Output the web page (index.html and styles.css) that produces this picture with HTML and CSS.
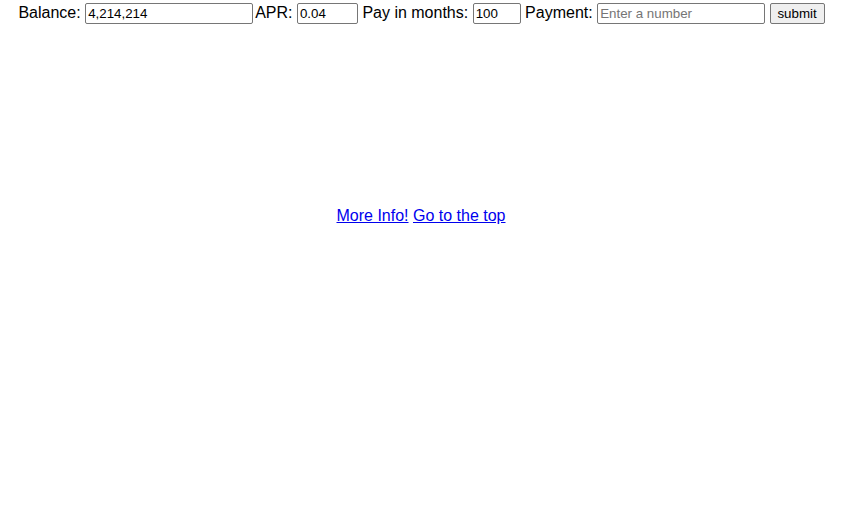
FILE: index.html
```html
<!DOCTYPE html>
<html>
<head>
<meta charset="utf-8">
<link rel="stylesheet" href="styles.css">
</head>
<body>
<form class="calc">
  <label>Balance: <input class="field field-wide" type="text" value="4,214,214"></label><label class="apr">APR: <input class="field field-apr" type="text" value="0.04"></label>
  <label>Pay in months: <input class="field field-months" type="text" value="100"></label>
  <label>Payment: <input class="field field-wide" type="text" placeholder="Enter a number"></label>
  <button class="submit" type="button">submit</button>
</form>
<div class="links">
  <a href="#">More Info!</a> <a href="#">Go to the top</a>
</div>
</body>
</html>
```
FILE: styles.css
```css
html, body {
  margin: 0;
  padding: 0;
  background: #fff;
}
body {
  font-family: "Liberation Sans", Arial, sans-serif;
  font-size: 16px;
  color: #000;
}
.calc {
  text-align: center;
  padding: 2px 8px 0 0;
  line-height: 21px;
  margin: 0;
}
.apr {
  margin-left: 2px;
}
.field {
  box-sizing: border-box;
  height: 21px;
  font-family: "Liberation Sans", Arial, sans-serif;
  font-size: 13.333px;
  padding: 1px 2px;
  border: 1px solid #767676;
  border-radius: 2px;
  vertical-align: baseline;
  color: #000;
}
.field::placeholder {
  color: #757575;
}
.field-wide { width: 168px; }
.field-apr { width: 61px; }
.field-months { width: 48px; }
.submit {
  box-sizing: border-box;
  width: 55px;
  height: 21px;
  font-family: "Liberation Sans", Arial, sans-serif;
  font-size: 13.333px;
  padding: 1px 6px;
  border: 1px solid #767676;
  border-radius: 2px;
  background: #efefef;
  color: #000;
}
.links {
  text-align: center;
  padding: 183px 9px 0 0;
  line-height: 18px;
}
.links a {
  color: #0000ee;
}
```
